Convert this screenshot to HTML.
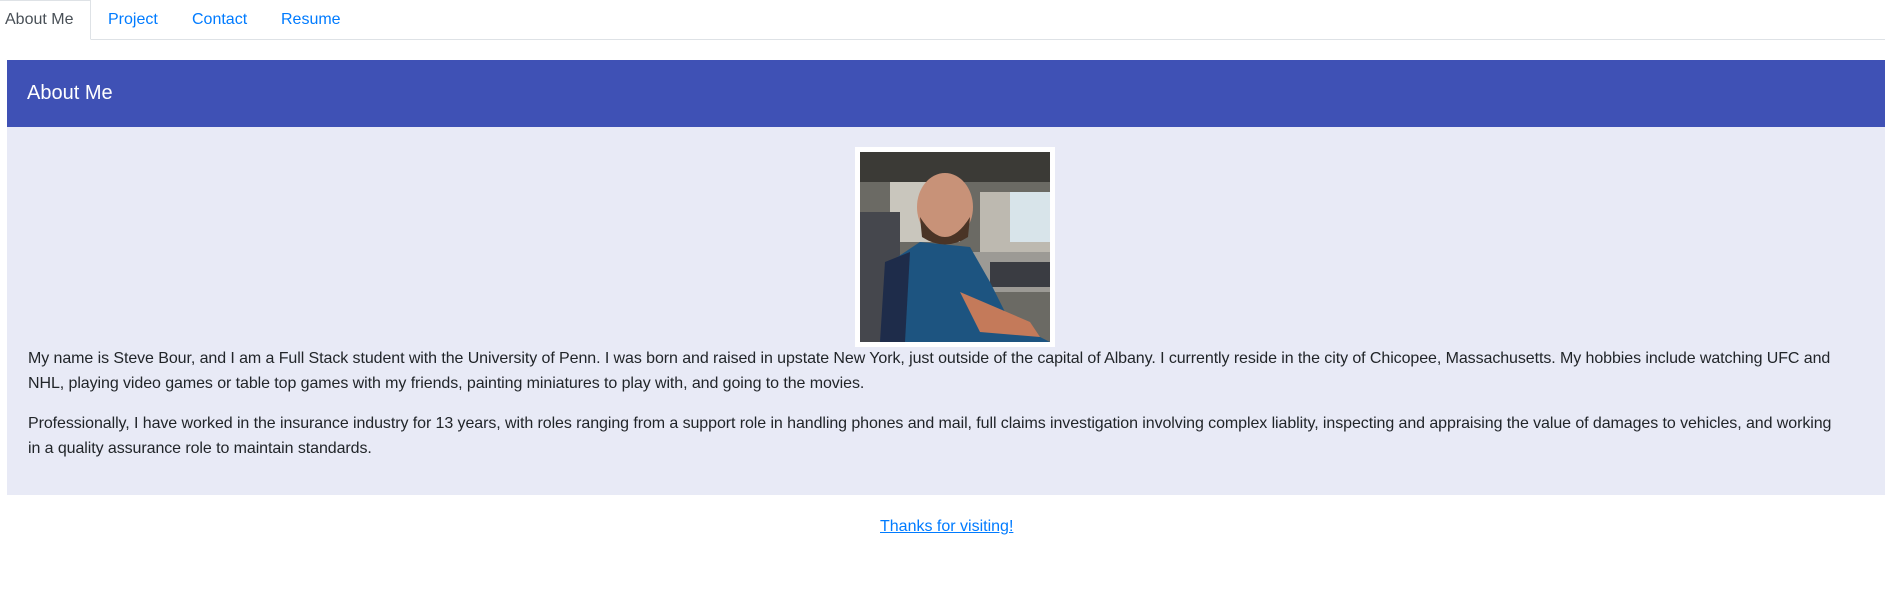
<!DOCTYPE html>
<html><head><meta charset="utf-8"><style>
*{box-sizing:border-box}
body{margin:0;width:1885px;height:600px;background:#fff;font-family:"Liberation Sans",sans-serif;font-size:16px;color:#212529;overflow:hidden;position:relative}
.nav{position:absolute;left:0;top:0;width:1885px;height:40px;border-bottom:1px solid #dee2e6}
.nav a{position:absolute;top:0;height:40px;line-height:40px;color:#007bff;text-decoration:none;font-size:16px}
.tab{position:absolute;left:-1px;top:0;width:92px;height:40px;border:1px solid #dee2e6;border-bottom:1px solid #fff;background:#fff;color:#495057;line-height:38px;padding-left:5px;font-size:16px}
.head{position:absolute;left:7px;top:60px;width:1878px;height:67px;background:#3f51b5;color:#fff;font-size:20px;line-height:67px;padding-left:20px}
.band{position:absolute;left:7px;top:127px;width:1878px;height:368px;background:#e8eaf6}
.photo{position:absolute;left:855px;top:147px;width:200px;height:200px;background:#fff;padding:5px}
.p{position:absolute;left:28px;white-space:nowrap;line-height:25px;letter-spacing:-0.08px}
.thanks{position:absolute;left:880px;top:516px;color:#007bff;text-decoration:underline;font-size:16px;line-height:22px}
</style></head><body>
<div class="nav">
<div class="tab">About Me</div>
<a style="left:108px">Project</a>
<a style="left:192px">Contact</a>
<a style="left:281px">Resume</a>
</div>
<div class="head">About Me</div>
<div class="band"></div>
<div class="photo"><svg width="190" height="190" viewBox="0 0 190 190">
<rect width="190" height="190" fill="#6b6a64"/>
<rect x="0" y="0" width="190" height="30" fill="#3b3a36"/>
<rect x="30" y="30" width="70" height="60" fill="#c9c6bd"/>
<rect x="120" y="40" width="70" height="60" fill="#bdb9b0"/>
<rect x="150" y="40" width="40" height="50" fill="#d8e4ea"/>
<rect x="110" y="100" width="80" height="40" fill="#9c9a95"/>
<rect x="130" y="110" width="60" height="25" fill="#3a3c42"/>
<rect x="0" y="60" width="40" height="130" fill="#45474d"/>
<path d="M20 190 L30 110 L60 90 L110 95 L130 130 L150 170 L190 190 Z" fill="#1d5480"/>
<path d="M20 190 L25 110 L50 100 L45 190 Z" fill="#1e2c4a"/>
<path d="M100 140 L170 170 L180 185 L120 180 Z" fill="#c47a5a"/>
<ellipse cx="85" cy="55" rx="28" ry="34" fill="#c89278"/>
<path d="M60 65 Q85 105 110 65 L108 85 Q85 100 62 85 Z" fill="#4a3426"/>
</svg></div>
<div class="p" style="top:346px">My name is Steve Bour, and I am a Full Stack student with the University of Penn. I was born and raised in upstate New York, just outside of the capital of Albany. I currently reside in the city of Chicopee, Massachusetts. My hobbies include watching UFC and<br>NHL, playing video games or table top games with my friends, painting miniatures to play with, and going to the movies.</div>
<div class="p" style="top:411px">Professionally, I have worked in the insurance industry for 13 years, with roles ranging from a support role in handling phones and mail, full claims investigation involving complex liablity, inspecting and appraising the value of damages to vehicles, and working<br>in a quality assurance role to maintain standards.</div>
<a class="thanks">Thanks for visiting!</a>
</body></html>
